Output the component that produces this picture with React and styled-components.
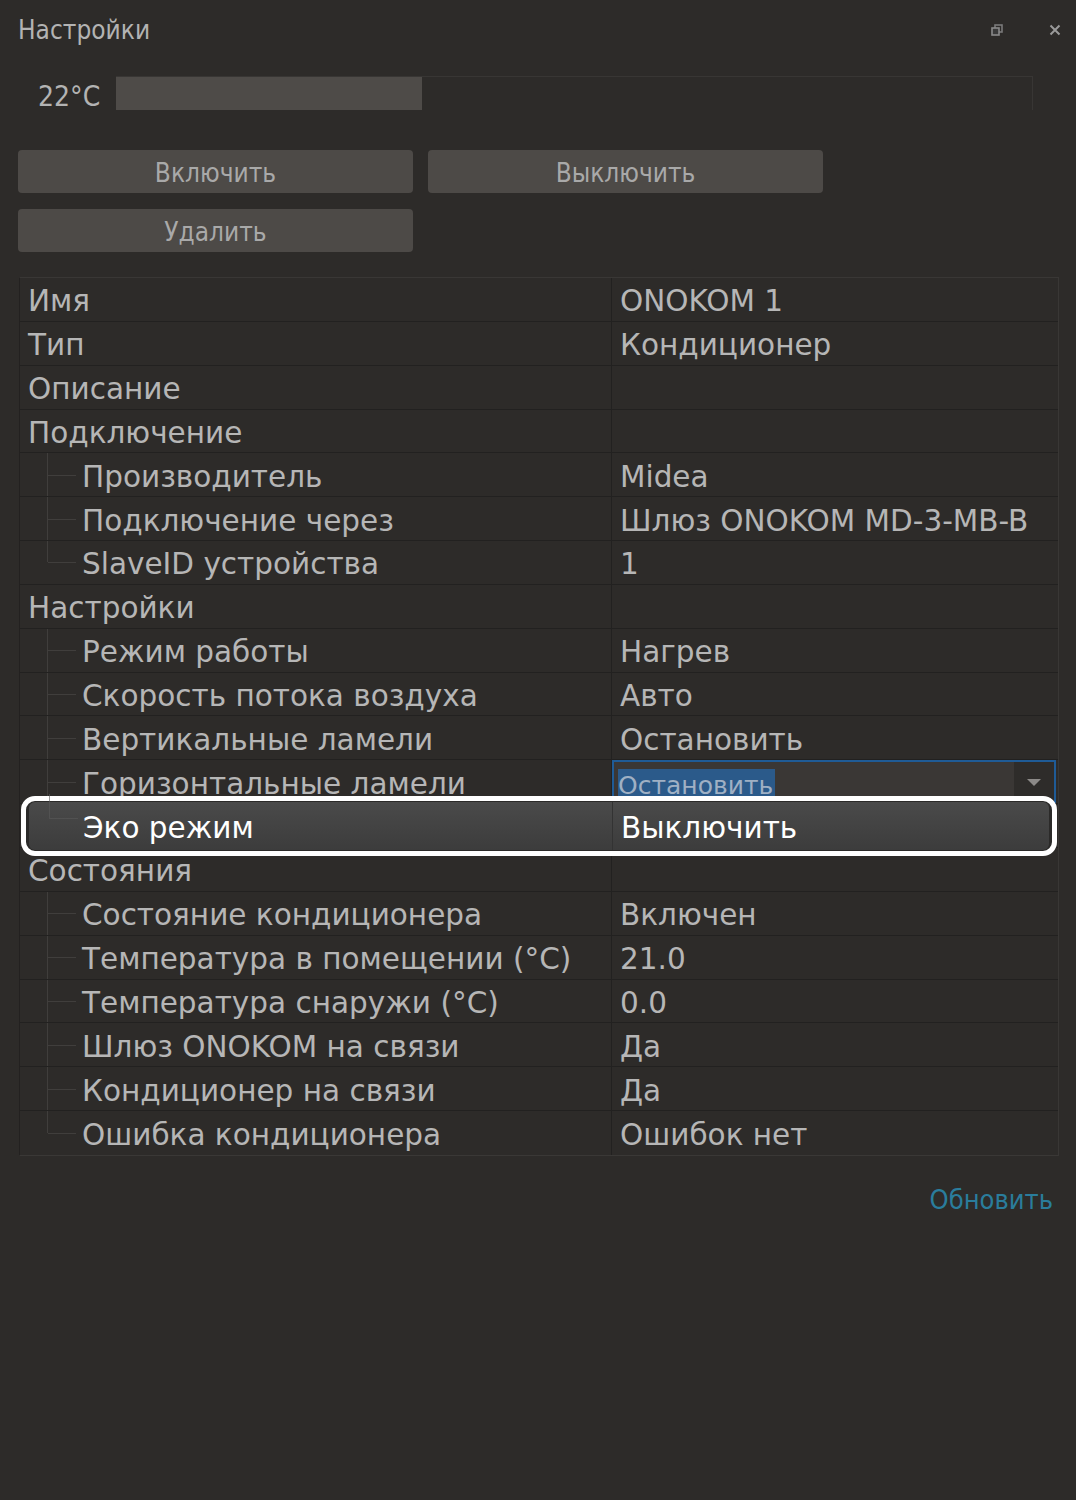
import styled, { createGlobalStyle } from "styled-components";

const GlobalStyle = createGlobalStyle`
    html, body {
        margin: 0;
        padding: 0;
        background: #2d2b29;
    }
    body {
        font-family: "DejaVu Sans", "Noto Sans", sans-serif;
    }
`

const Panel = styled.div`
    width: 1076px;
    height: 1500px;
    background: #2d2b29;
    box-sizing: border-box;
    padding-top: 12px;
`

const Header = styled.div`
    display: flex;
    align-items: center;
    justify-content: space-between;
    height: 36px;
    padding: 0 14px 0 18px;
`

const Title = styled.div`
    font-family: "DejaVu Sans Condensed", "DejaVu Sans", sans-serif;
    font-size: 26px;
    color: #b3b3b3;
`

const HeaderIcons = styled.div`
    display: flex;
    align-items: center;
    gap: 44px;
`

const SliderRow = styled.div`
    display: flex;
    align-items: center;
    margin: 28px 43px 0 38px;
    height: 34px;
`

const SliderLabel = styled.div`
    font-family: "DejaVu Sans Condensed", "DejaVu Sans", sans-serif;
    font-size: 28px;
    color: #b3b3b3;
    width: 78px;
    padding-top: 6px;
`

const Track = styled.div`
    flex: 1;
    height: 34px;
    box-sizing: border-box;
    border-top: 1px solid #383634;
    border-right: 1px solid #383634;
    display: flex;
`

const Fill = styled.div`
    background: #4e4b48;
    height: 100%;
`

const Buttons = styled.div`
    display: grid;
    grid-template-columns: 395px 395px;
    column-gap: 15px;
    row-gap: 16px;
    margin: 40px 0 0 18px;
`

const Button = styled.button`
    height: 43px;
    border: none;
    border-radius: 4px;
    background: #4d4a47;
    color: #a9a9a9;
    font-family: "DejaVu Sans Condensed", "DejaVu Sans", sans-serif;
    font-size: 26px;
    padding: 2px 0 0;
    cursor: pointer;
`

const Table = styled.div`
    margin: 25px 0 0 19px;
    width: 1038px;
    border: 1px solid #393735;
    border-left-color: #232120;
    border-bottom-color: #3a3836;
`

const Row = styled.div`
    position: relative;
    display: grid;
    grid-template-columns: 592px 1fr;
    height: 43.85px;
    box-sizing: border-box;
    border-bottom: 1px solid #222120;
    &:last-child {
        border-bottom: none;
    }
`

const NameCell = styled.div`
    position: relative;
    display: flex;
    align-items: center;
    padding-left: ${(p) => (p.$child ? "62px" : "8px")};
    padding-top: 4px;
    border-right: 1px solid #222120;
    font-size: 29.5px;
    color: #b6b6b6;
    white-space: nowrap;
    overflow: hidden;
`

const ValueCell = styled.div`
    position: relative;
    display: flex;
    align-items: center;
    padding-left: 8px;
    padding-top: 4px;
    font-size: 29.5px;
    color: #b6b6b6;
    white-space: nowrap;
    overflow: hidden;
`

const TreeLine = styled.span`
    position: absolute;
    left: 27px;
    top: 0;
    width: 28px;
    height: ${(p) => (p.$last ? "50%" : "100%")};
    border-left: 1px solid #403e3c;
    &::after {
        content: "";
        position: absolute;
        left: 0;
        top: ${(p) => (p.$last ? "100%" : "50%")};
        width: 28px;
        border-top: 1px solid #403e3c;
    }
`

const Editor = styled.div`
    position: absolute;
    left: 0;
    top: 0;
    right: 2px;
    bottom: -2px;
    display: flex;
    align-items: center;
    box-sizing: border-box;
    border: 2px solid #1f5b96;
    background: #3a3735;
`

const Selected = styled.span`
    background: #2b5a8a;
    color: #9fb0c4;
    font-size: 25px;
    margin-left: 4px;
    margin-top: 6px;
    padding-right: 2px;
    line-height: 34px;
`

const DropButton = styled.div`
    margin-left: auto;
    width: 40px;
    height: 100%;
    background: #2e2c2a;
    display: flex;
    align-items: center;
    justify-content: center;
`

const Callout = styled.div`
    position: absolute;
    left: 1px;
    right: 1px;
    top: -8px;
    bottom: -9px;
    border: 5px solid #ffffff;
    border-radius: 14px;
    background: #2b2a29;
    padding: 1px 3px;
    z-index: 2;
    display: flex;
`

const CalloutInner = styled.div`
    flex: 1;
    display: grid;
    grid-template-columns: 584px 1fr;
    border-radius: 6px;
    background: linear-gradient(to bottom, #4a4a4a, #3c3c3c);
`

const CalloutCell = styled.div`
    display: flex;
    align-items: center;
    position: relative;
    padding-left: ${(p) => p.$pad};
    padding-top: 4px;
    font-size: 29.5px;
    color: #ffffff;
    font-weight: 500;
    border-right: ${(p) => (p.$divider ? "1px solid #333" : "none")};
`

const CalloutTree = styled.span`
    position: absolute;
    left: 20px;
    top: -8px;
    height: 50%;
    width: 28px;
    border-left: 1px solid #5a5a5a;
    border-bottom: 1px solid #5a5a5a;
    opacity: 0.6;
`

const Footer = styled.div`
    display: flex;
    justify-content: flex-end;
    margin: 28px 23px 0 0;
`

const Link = styled.a`
    font-family: "DejaVu Sans Condensed", "DejaVu Sans", sans-serif;
    font-size: 27px;
    color: #2a7d9c;
    text-decoration: none;
    cursor: pointer;
`

const rows = [
    { name: "Имя", value: "ONOKOM 1" },
    { name: "Тип", value: "Кондиционер" },
    { name: "Описание", value: "" },
    { name: "Подключение", value: "" },
    { name: "Производитель", value: "Midea", child: true },
    { name: "Подключение через", value: "Шлюз ONOKOM MD-3-MB-B", child: true },
    { name: "SlaveID устройства", value: "1", child: true, last: true },
    { name: "Настройки", value: "" },
    { name: "Режим работы", value: "Нагрев", child: true },
    { name: "Скорость потока воздуха", value: "Авто", child: true },
    { name: "Вертикальные ламели", value: "Остановить", child: true },
    { name: "Горизонтальные ламели", value: "Остановить", child: true, editing: true },
    { name: "Эко режим", value: "Выключить", child: true, last: true, callout: true },
    { name: "Состояния", value: "" },
    { name: "Состояние кондиционера", value: "Включен", child: true },
    { name: "Температура в помещении (°C)", value: "21.0", child: true },
    { name: "Температура снаружи (°C)", value: "0.0", child: true },
    { name: "Шлюз ONOKOM на связи", value: "Да", child: true },
    { name: "Кондиционер на связи", value: "Да", child: true },
    { name: "Ошибка кондиционера", value: "Ошибок нет", child: true, last: true },
]

function FloatIcon() {
    return (
        <svg width="14" height="14" viewBox="0 0 14 14">
            <rect x="5" y="2" width="7" height="7" fill="none" stroke="#7a7a7a" strokeWidth="1.6" />
            <rect x="2" y="5" width="7" height="7" fill="#3a3a3a" stroke="#8a8a8a" strokeWidth="1.6" />
        </svg>
    )
}

function CloseIcon() {
    return (
        <svg width="14" height="14" viewBox="0 0 14 14">
            <path d="M2.5 2.5 L11.5 11.5 M11.5 2.5 L2.5 11.5" stroke="#9a9a9a" strokeWidth="2" />
        </svg>
    )
}

export default function App() {
    return (
        <Panel>
            <GlobalStyle />
            <Header>
                <Title>Настройки</Title>
                <HeaderIcons>
                    <FloatIcon />
                    <CloseIcon />
                </HeaderIcons>
            </Header>

            <SliderRow>
                <SliderLabel>22°C</SliderLabel>
                <Track>
                    <Fill style={{ width: `${(306 / 917) * 100}%` }} />
                </Track>
            </SliderRow>

            <Buttons>
                <Button>Включить</Button>
                <Button>Выключить</Button>
                <Button>Удалить</Button>
            </Buttons>

            <Table>
                {rows.map((r) => (
                    <Row key={r.name}>
                        <NameCell $child={r.child}>
                            {r.child && <TreeLine $last={r.last} />}
                            {r.name}
                        </NameCell>
                        <ValueCell>
                            {r.editing ? (
                                <Editor>
                                    <Selected>{r.value}</Selected>
                                    <DropButton>
                                        <svg width="16" height="9" viewBox="0 0 16 9">
                                            <path d="M1 1 L15 1 L8 8 Z" fill="#8c8a88" />
                                        </svg>
                                    </DropButton>
                                </Editor>
                            ) : (
                                r.value
                            )}
                        </ValueCell>
                        {r.callout && (
                            <Callout>
                                <CalloutInner>
                                    <CalloutCell $pad="54px" $divider>
                                        <CalloutTree />
                                        {r.name}
                                    </CalloutCell>
                                    <CalloutCell $pad="8px">{r.value}</CalloutCell>
                                </CalloutInner>
                            </Callout>
                        )}
                    </Row>
                ))}
            </Table>

            <Footer>
                <Link>Обновить</Link>
            </Footer>
        </Panel>
    )
}
